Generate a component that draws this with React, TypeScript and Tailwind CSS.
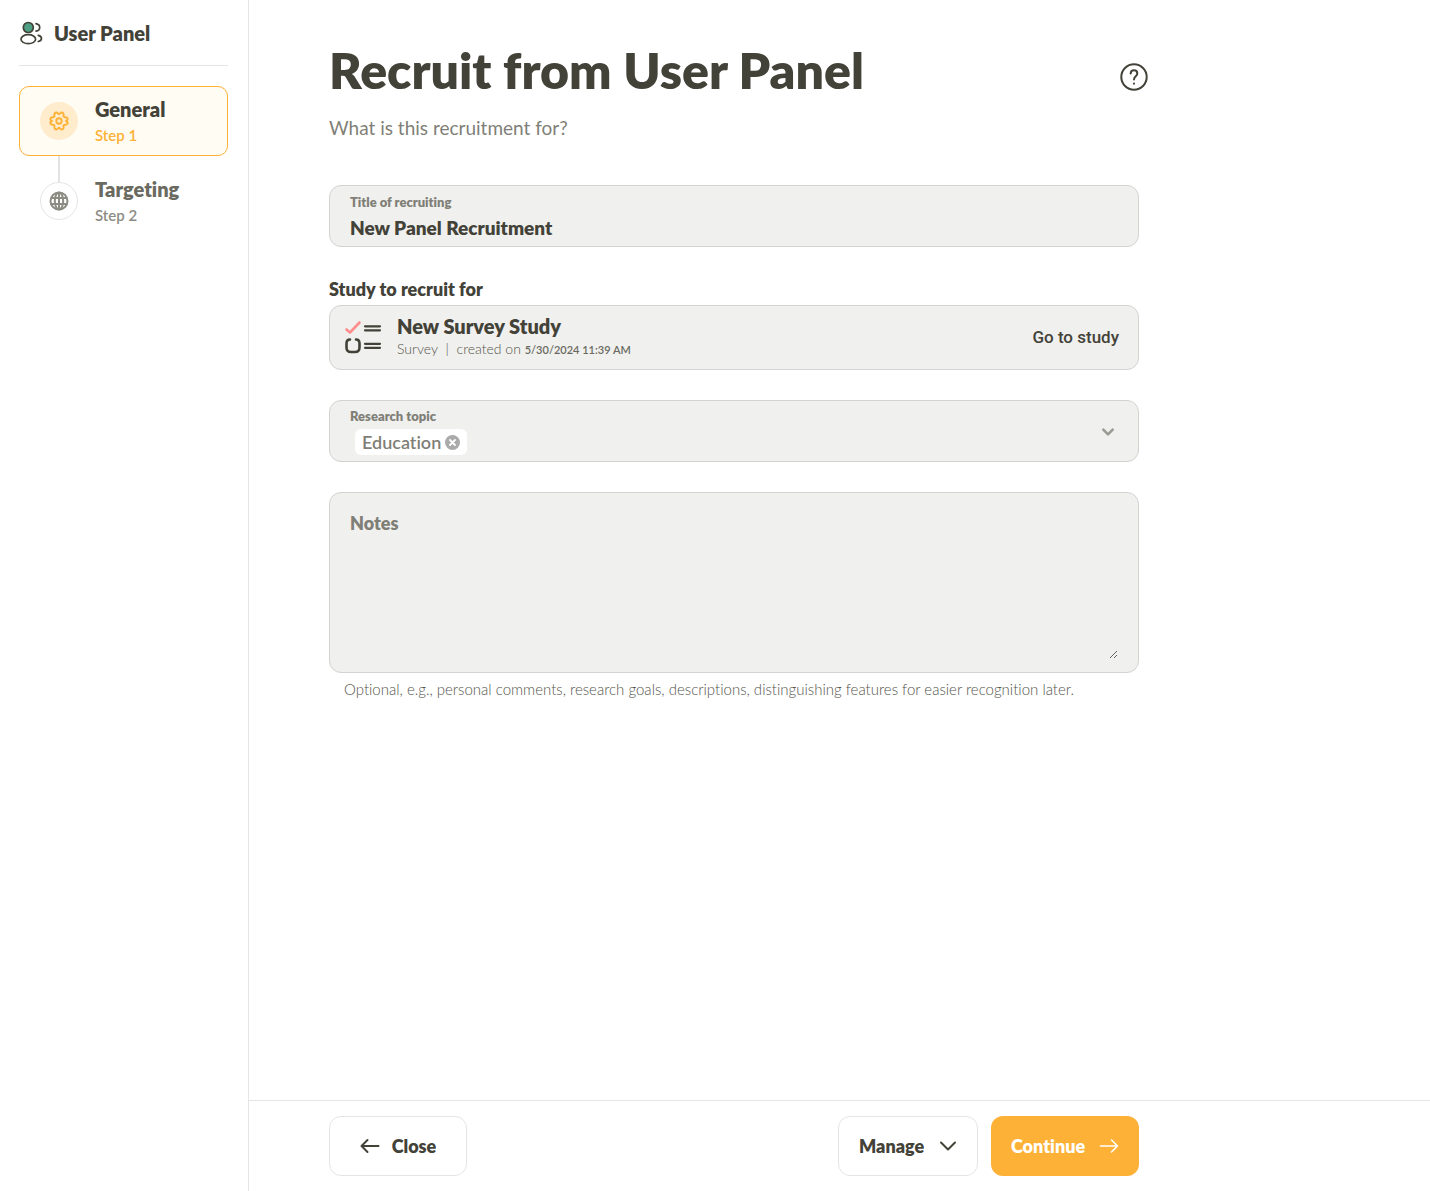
import React, { useState } from "react";

const PanelLogo = () => (
  <svg viewBox="0 0 24 24" className="h-6 w-6 shrink-0" fill="none" stroke="#434238" strokeWidth="1.7" strokeLinecap="round">
    <circle cx="9.3" cy="6.5" r="5" fill="#4fa083" />
    <ellipse cx="9.3" cy="18.2" rx="7.3" ry="4.5" />
    <path d="M17 2.700c2.300.5 3.700 1.800 3.700 3.700S19.300 9.800 17 10.200" />
    <path d="M19.300 14.400c2 .5 3.200 1.600 3.200 3.100 0 1.400-1.200 2.500-3.200 3" />
  </svg>
);

const GearIcon = () => (
  <svg viewBox="0 0 20 20" className="h-5 w-5" fill="none" stroke="currentColor" strokeWidth="1.900" strokeLinejoin="round">
    <path d="M10 3.200C10.900 3.200 11.200 1.500 12.600 1.500 14.300 1.500 15 3 14.500 4.800 14.300 5.700 15 6.200 16 6.200 18 6.200 19 7.300 18.600 8.700 18.300 9.500 17 9.400 17 10S18.300 10.500 18.600 11.300C19 12.700 18 13.800 16 13.800 15 13.800 14.300 14.300 14.500 15.200 15 17 14.300 18.500 12.600 18.500 11.200 18.500 10.900 16.800 10 16.800S8.800 18.500 7.400 18.500C5.700 18.500 5 17 5.500 15.200 5.700 14.300 5 13.800 4 13.800 2 13.800 1 12.700 1.400 11.300 1.700 10.500 3 10.600 3 10S1.700 9.500 1.400 8.700C1 7.300 2 6.200 4 6.200 5 6.200 5.700 5.700 5.500 4.800 5 3 5.700 1.500 7.400 1.500 8.800 1.500 9.100 3.200 10 3.200Z" />
    <circle cx="10" cy="10" r="2.700" />
  </svg>
);

const GlobeIcon = () => (
  <svg viewBox="0 0 20 20" className="h-5 w-5" fill="none" stroke="currentColor" strokeWidth="2">
    <circle cx="10" cy="10" r="8.500" />
    <ellipse cx="10" cy="10" rx="4.200" ry="8.500" />
    <path d="M10 1.500v17M2.500 7h15M2.500 13h15" />
  </svg>
);

const SurveyIcon = () => (
  <svg viewBox="0 0 38 36" className="h-9 w-[38px] shrink-0" fill="none" strokeWidth="2.600" strokeLinecap="round">
    <path d="M2.500 9.500 6 12.500 15.500 2.500" stroke="#ff8d8d" strokeLinejoin="round" />
    <g stroke="#434238">
      <path d="M21 6.300h15M21 10.300h15M21 23.800h15M21 27.800h15" strokeWidth="2.200" />
      <path d="M6 19.500C3.300 19.500 2.500 21 2.500 23.500v4C2.500 31 4 32 7 32h4c3 0 4.500-1 4.500-4.500v-4c0-2.500-.8-4-3.500-4" />
    </g>
  </svg>
);

const Chevron = ({ className }: { className: string }) => (
  <svg viewBox="0 0 18 18" className={className} fill="none" stroke="currentColor" strokeLinecap="round" strokeLinejoin="round">
    <path d="M2 5.500 9 12.500l7-7" />
  </svg>
);

const Arrow = ({ className }: { className: string }) => (
  <svg viewBox="0 0 20 16" className={className} fill="none" stroke="currentColor" strokeLinecap="round" strokeLinejoin="round">
    <path d="M1.500 8h17M12.500 2l6 6-6 6" />
  </svg>
);

const fieldBox = "rounded-xl border border-[#d3d3d1] bg-[#f0f0ee]";

const App = () => {
  const [title, setTitle] = useState("New Panel Recruitment");
  const [notes, setNotes] = useState("");
  const [topic, setTopic] = useState("Education");

  return (
    <div className="flex min-h-screen bg-white font-['Lato',sans-serif] text-[#434238] [font-variant-ligatures:none]">
      <aside className="w-[249px] shrink-0 border-r border-[#e5e5e5] pr-5 pl-[19px]">
        <div className="flex h-[66px] items-center gap-[11px] border-b border-[#e5e5e5]">
          <PanelLogo />
          <span className="text-xl font-extrabold">User Panel</span>
        </div>
        <nav className="mt-5 flex flex-col gap-2.5">
          <button className="flex h-[70px] items-center gap-[17px] rounded-[10px] border border-[#fdb137] bg-[#fffcf4] pl-5 text-left">
            <span className="flex h-[38px] w-[38px] items-center justify-center rounded-full bg-[#ffeccc] text-[#fdb137]">
              <GearIcon />
            </span>
            <span>
              <span className="block text-xl leading-7 font-extrabold">General</span>
              <span className="block text-[15px] leading-6 font-semibold text-[#fdb137]">Step 1</span>
            </span>
          </button>
          <button className="relative flex h-[70px] items-center gap-[17px] border border-transparent pl-5 text-left">
            <span className="absolute -top-[11px] left-[38px] h-[27px] w-0.5 bg-[#e2e2e2]" />
            <span className="flex h-[38px] w-[38px] items-center justify-center rounded-full border border-[#e5e5e5] text-[#8c8c84]">
              <GlobeIcon />
            </span>
            <span>
              <span className="block text-xl leading-7 font-extrabold text-[#6a6a60]">Targeting</span>
              <span className="block text-[15px] leading-6 font-semibold text-[#8c8c84]">Step 2</span>
            </span>
          </button>
        </nav>
      </aside>

      <div className="flex min-w-0 flex-1 flex-col">
        <main className="flex-1 px-20 pt-10">
          <div className="max-w-[810px]">
            <header className="-mr-[9px] flex items-center justify-between">
              <h1 className="text-[50px] leading-[60px] font-extrabold">Recruit from User Panel</h1>
              <button aria-label="Help" className="mt-3.5">
                <svg viewBox="0 0 28 28" className="h-7 w-7" fill="none" stroke="currentColor" strokeWidth="2" strokeLinecap="round">
                  <circle cx="14" cy="14" r="12.700" />
                  <path d="M10.700 10.500c0-2 1.400-3.300 3.300-3.300s3.300 1.300 3.300 3.200c0 2.700-3.300 2.900-3.300 6M14 20.600v.1" />
                </svg>
              </button>
            </header>
            <p className="mt-[13px] text-[19px] leading-[30px] text-[#7f7f77]">What is this recruitment for?</p>

            <div className={`${fieldBox} mt-[42px] flex h-[62px] flex-col px-5 pt-[7px]`}>
              <label htmlFor="title" className="text-[13px] leading-[18px] font-extrabold text-[#7f7f77]">
                Title of recruiting
              </label>
              <input
                id="title"
                className="h-8 w-full bg-transparent text-[19px] font-extrabold outline-none"
                value={title}
                onChange={(e) => setTitle(e.target.value)}
              />
            </div>

            <h2 className="mt-[30px] mb-1 text-lg leading-6 font-extrabold">Study to recruit for</h2>
            <div className={`${fieldBox} flex h-[65px] items-center pr-[19px] pl-[14px]`}>
              <SurveyIcon />
              <div className="ml-[15px] flex-1">
                <div className="text-xl leading-6 font-extrabold">New Survey Study</div>
                <div className="text-sm leading-[22px] font-light text-[#55554c]">
                  Survey <span className="mx-1">|</span> created on{" "}
                  <span className="text-[11px] font-semibold text-[#6a6a60]">5/30/2024 11:39 AM</span>
                </div>
              </div>
              <a href="#study" className="font-['Roboto',sans-serif] text-[17px] font-medium">
                Go to study
              </a>
            </div>

            <div className={`${fieldBox} mt-[30px] h-[62px] px-5 pt-1.5`}>
              <label htmlFor="topic" className="block text-[13px] leading-[18px] font-extrabold text-[#7f7f77]">
                Research topic
              </label>
              <div className="mt-1 flex h-[26px] items-center">
                {topic && (
                  <span className="ml-[5px] flex h-[26px] items-center gap-1 rounded-md bg-white px-[7px] text-lg leading-6 font-semibold text-[#7f7f77]">
                    {topic}
                    <button aria-label={`Remove ${topic}`} onClick={() => setTopic("")}>
                      <svg viewBox="0 0 15 15" className="h-[15px] w-[15px]">
                        <circle cx="7.500" cy="7.500" r="7.500" fill="#aaaaaa" />
                        <path d="m5 5 5 5M10 5l-5 5" stroke="#fff" strokeWidth="1.800" strokeLinecap="round" />
                      </svg>
                    </button>
                  </span>
                )}
                <select
                  id="topic"
                  className="h-[26px] flex-1 appearance-none bg-transparent outline-none"
                  value=""
                  onChange={(e) => setTopic(e.target.value)}
                >
                  <option value=""></option>
                  <option>Education</option>
                </select>
                <Chevron className="pointer-events-none mr-1 mb-5 h-3 w-3 stroke-[4] text-[#9b9b93]" />
              </div>
            </div>

            <div className={`${fieldBox} mt-[30px] px-5 pt-[18px] pb-[13px]`}>
              <label htmlFor="notes" className="block text-lg leading-6 font-extrabold text-[#7f7f77]">
                Notes
              </label>
              <textarea
                id="notes"
                className="block h-[124px] w-full resize bg-transparent text-lg outline-none"
                value={notes}
                onChange={(e) => setNotes(e.target.value)}
              />
            </div>
            <p className="mt-1.5 px-[15px] text-[15px] leading-5 font-light text-[#55554c]">
              Optional, e.g., personal comments, research goals, descriptions, distinguishing features for easier recognition later.
            </p>
          </div>
        </main>

        <footer className="border-t border-[#e5e5e5] px-20 py-[15px]">
          <div className="flex max-w-[810px] text-lg font-extrabold">
            <button className="flex h-[60px] w-[138px] items-center justify-center gap-3 rounded-xl border border-[#e5e5e5]">
              <Arrow className="h-4 w-5 rotate-180 stroke-2" />
              Close
            </button>
            <button className="ml-auto flex h-[60px] w-[140px] items-center justify-between rounded-xl border border-[#e5e5e5] px-5">
              Manage
              <Chevron className="h-[18px] w-[18px] stroke-2" />
            </button>
            <button className="ml-[13px] flex h-[60px] w-[148px] items-center justify-between rounded-xl bg-[#fdb137] px-5 text-white">
              Continue
              <Arrow className="h-4 w-5 stroke-[1.6]" />
            </button>
          </div>
        </footer>
      </div>
    </div>
  );
};

export default App;
